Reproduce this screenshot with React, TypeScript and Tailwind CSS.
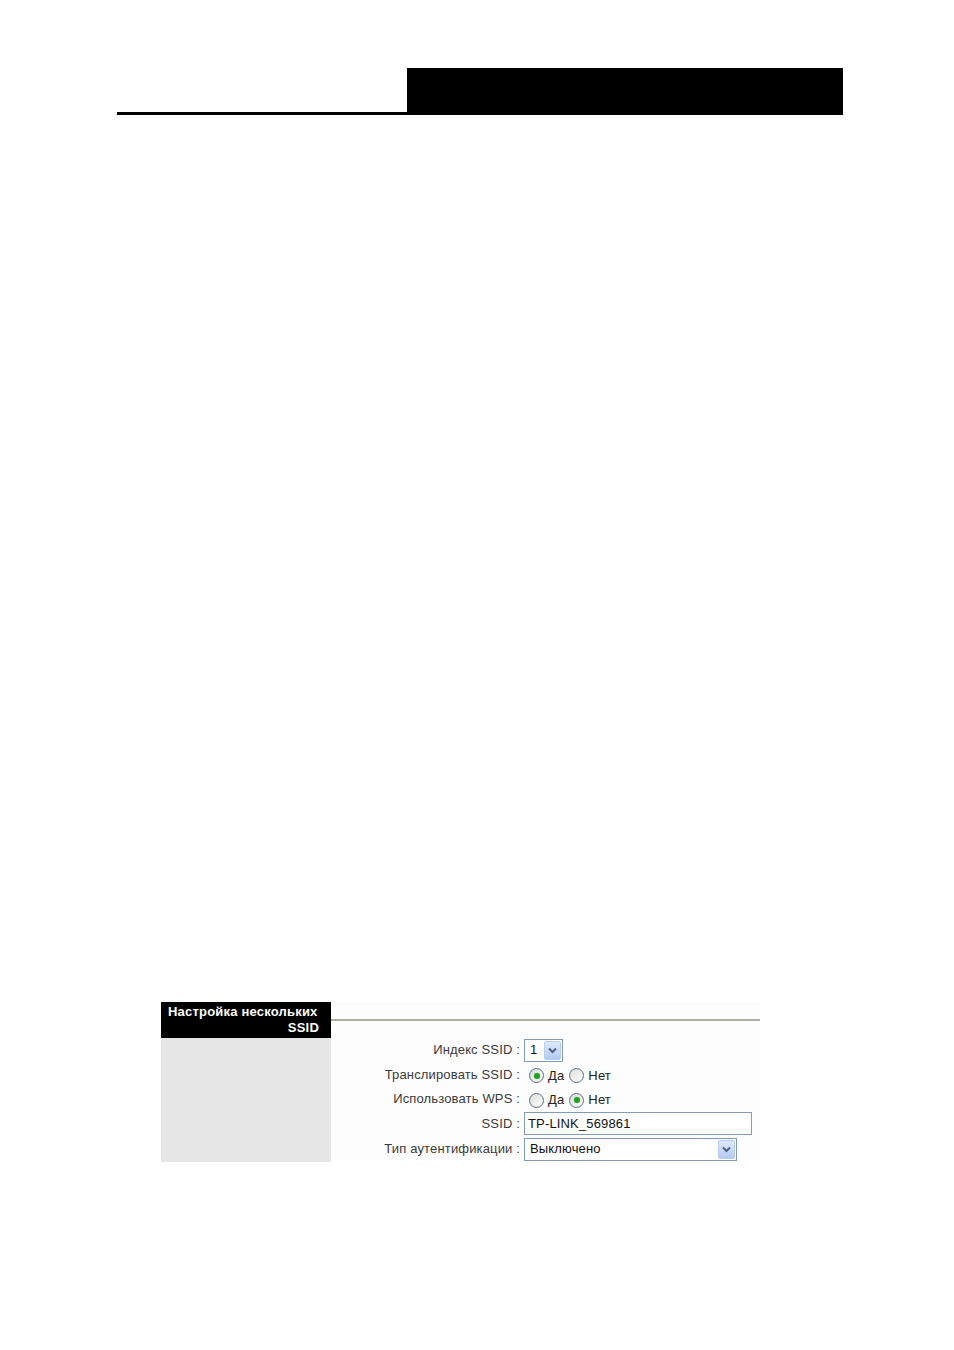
const font = { fontFamily: '"Liberation Sans", Arial, sans-serif' };

const Arrow = ({ h }: { h: number }) => (
  <div
    className="flex items-center justify-center rounded-[2px] border border-[#b9cdf0] bg-gradient-to-b from-[#dfe9fb] to-[#b4c9f2]"
    style={{ width: 17, height: h }}
  >
    <svg width="9" height="7" viewBox="0 0 9 7">
      <path d="M1 1.5 L4.5 5 L8 1.5" fill="none" stroke="#4d6185" strokeWidth="2" />
    </svg>
  </div>
);

const Radio = ({ on }: { on?: boolean }) => (
  <span className="inline-flex h-[15px] w-[15px] items-center justify-center rounded-full border border-[#5b6f8e] bg-gradient-to-br from-[#dcdcd6] to-white">
    {on && <span className="h-[6px] w-[6px] rounded-full bg-[#21a121] shadow-[0_0_1px_#7fd37f]" />}
  </span>
);

const rows = [
  { label: "Индекс SSID :", h: "h-[24px]" },
  { label: "Транслировать SSID :", h: "h-[25px]" },
  { label: "Использовать WPS :", h: "h-[24px]" },
  { label: "SSID :", h: "h-[25px]" },
  { label: "Тип аутентификации :", h: "h-[26px]" },
];

export default function App() {
  return (
    <div className="min-h-[1350px] w-[954px] bg-white" style={font}>
      {/* page header */}
      <div className="ml-[117px] flex w-[726px] items-end pt-[68px]">
        <div className="h-[47px] flex-1 border-b-[3px] border-black" />
        <div className="h-[47px] w-[436px] bg-black" />
      </div>

      {/* screenshot */}
      <div className="ml-[161px] mt-[887px] flex h-[160px] w-[599px]">
        <div className="flex w-[170px] flex-col">
          <div className="h-[36px] bg-black px-[7px] pt-[2px] text-right text-[13px] font-bold leading-[16px] tracking-[0.2px] text-white">
            <div className="whitespace-nowrap text-left">Настройка нескольких</div>
            <div className="pr-[5px]">SSID</div>
          </div>
          <div className="flex-1 bg-[#e6e6e6]" />
        </div>
        <div className="flex flex-1 flex-col bg-[#fdfdfd] text-[13px] tracking-[0.15px] text-[#3a3a3a]">
          <div className="h-[36px] pt-[17px]">
            <div className="h-[2px] bg-[#aeae9f]" />
          </div>
          {rows.map((r, i) => (
            <div key={i} className={`flex items-center ${r.h}`}>
              <div className="w-[189px] whitespace-nowrap text-right">{r.label}</div>
              <div className="ml-[4px] flex items-center">
                {i === 0 && (
                  <div className="flex h-[23px] w-[39px] items-center justify-between border border-[#7f9db9] bg-white pl-[5px] pr-[1px]">
                    <span className="text-[#111]">1</span>
                    <Arrow h={19} />
                  </div>
                )}
                {(i === 1 || i === 2) && (
                  <div className="flex items-center pl-[5px] pt-[2px]">
                    <Radio on={i === 1} />
                    <span className="ml-[4px] mr-[5px] text-[#222]">Да</span>
                    <Radio on={i === 2} />
                    <span className="ml-[4px] text-[#222]">Нет</span>
                  </div>
                )}
                {i === 3 && (
                  <div className="flex h-[23px] w-[228px] items-center border border-[#7f9db9] bg-white pl-[3px] text-[#111]">
                    TP-LINK_569861
                  </div>
                )}
                {i === 4 && (
                  <div className="flex h-[23px] w-[213px] items-center justify-between border border-[#7f9db9] bg-white pl-[5px] pr-[1px] text-[#111]">
                    <span>Выключено</span>
                    <Arrow h={19} />
                  </div>
                )}
              </div>
            </div>
          ))}
        </div>
      </div>
    </div>
  );
}
